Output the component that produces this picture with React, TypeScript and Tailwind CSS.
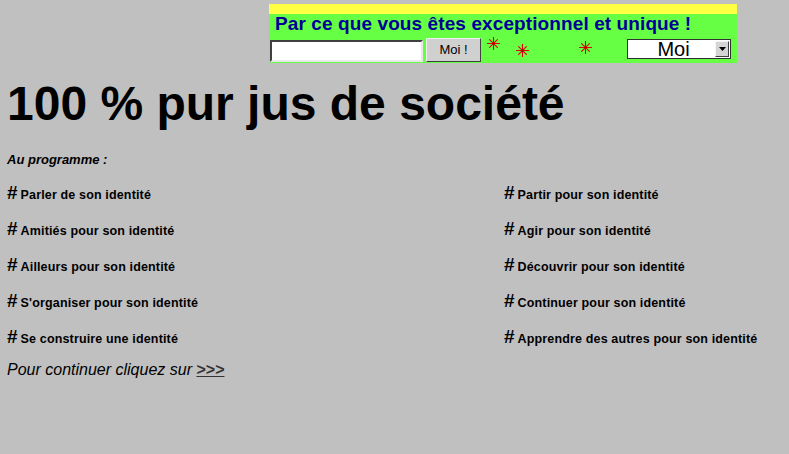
import React from "react";

function Star() {
  return (
    <svg width="13" height="13" viewBox="0 0 13 13" className="block">
      <g stroke="#e00000" strokeWidth="1.1" strokeLinecap="round">
        <line x1="6.5" y1="0.5" x2="6.5" y2="12.5" />
        <line x1="0.5" y1="6.5" x2="12.5" y2="6.5" />
        <line x1="2.6" y1="2.6" x2="10.4" y2="10.4" />
        <line x1="10.4" y1="2.6" x2="2.6" y2="10.4" />
      </g>
      <circle cx="6.5" cy="6.5" r="1" fill="#801000" />
    </svg>
  );
}

const left = [
  "Parler de son identité",
  "Amitiés pour son identité",
  "Ailleurs pour son identité",
  "S'organiser pour son identité",
  "Se construire une identité",
];
const right = [
  "Partir pour son identité",
  "Agir pour son identité",
  "Découvrir pour son identité",
  "Continuer pour son identité",
  "Apprendre des autres pour son identité",
];

function Item({ text }: { text: string }) {
  return (
    <div className="flex items-baseline h-[36px]">
      <span className="text-[19px] font-bold leading-[20px] mr-[3px]">#</span>
      <span className="text-[12.5px] font-bold leading-[20px] tracking-[0.15px]">{text}</span>
    </div>
  );
}

export default function App() {
  return (
    <div
      className="w-[789px] h-[454px] bg-[#c0c0c0] text-black overflow-hidden"
      style={{ fontFamily: '"Liberation Sans", Arial, sans-serif' }}
    >
      <div className="pt-[4px] pl-[269px]">
        <div className="w-[468px] border-t-[10px] border-[#ffff44] bg-[#66ff44] pb-[1px]">
          <div className="pl-[6px] text-[19px] font-bold leading-[20px] tracking-[0.1px] text-[#000099]">
            Par ce que vous êtes exceptionnel et unique !
          </div>
          <div className="flex items-start pl-[1px] mt-[4px]">
            <div className="mt-[2px] w-[153px] h-[22px] bg-white border-2 border-t-[#404040] border-l-[#404040] border-b-[#e8e8e8] border-r-[#e8e8e8]" />
            <button className="ml-[3px] w-[55px] h-[24px] bg-[#d0d0d0] border border-t-[#f0f0f0] border-l-[#f0f0f0] border-b-[#404040] border-r-[#404040] text-[13px] leading-[20px] text-black">
              Moi !
            </button>
            <div className="ml-[6px] mt-[-1px]">
              <Star />
            </div>
            <div className="ml-[16px] mt-[6px]">
              <Star />
            </div>
            <div className="ml-[50px] mt-[3px]">
              <Star />
            </div>
            <div className="ml-[35px] mt-[1px] w-[104px] h-[20px] bg-white border border-[#303030] flex items-center">
              <span className="flex-1 text-center text-[20px] leading-[18px] pl-[4px]">Moi</span>
              <span className="w-[14px] h-[16px] mr-[1px] bg-[#d4d4d4] border border-t-[#f4f4f4] border-l-[#f4f4f4] border-b-[#404040] border-r-[#404040] flex items-center justify-center">
                <svg width="7" height="4" viewBox="0 0 7 4">
                  <polygon points="0,0 7,0 3.5,4" fill="#000" />
                </svg>
              </span>
            </div>
          </div>
        </div>
      </div>

      <div className="pl-[7px]">
        <h1 className="mt-[13px] text-[48px] font-bold leading-[56px]">100 % pur jus de société</h1>
        <div className="mt-[20px] text-[13px] font-bold italic leading-[16px]">Au programme :</div>
        <div className="mt-[15px] grid grid-cols-[497px_1fr]">
          <div>
            {left.map((t) => (
              <Item key={t} text={t} />
            ))}
          </div>
          <div>
            {right.map((t) => (
              <Item key={t} text={t} />
            ))}
          </div>
        </div>
        <div className="mt-[-3px] text-[16px] italic leading-[20px]">
          Pour continuer cliquez sur{" "}
          <a className="not-italic font-bold underline text-[#333333]" href="#">
            &gt;&gt;&gt;
          </a>
        </div>
      </div>
    </div>
  );
}
